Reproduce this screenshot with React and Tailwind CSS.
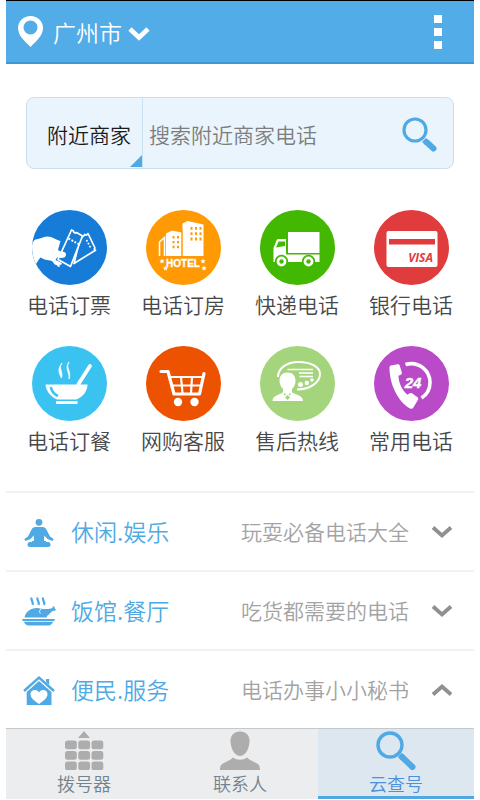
// src/App.jsx
import React, { useState } from "react";

const FONT = "font-['Noto_Sans_CJK_SC',sans-serif]";

const TicketIcon = () => (
  <svg viewBox="0 0 75 75" className="size-[75px]" aria-hidden="true">
    <circle cx="37.5" cy="37.5" r="37.5" fill="#167cd8" />
    <g stroke="#fff" strokeWidth="1.7" fill="#167cd8" strokeLinejoin="round">
      <path d="M48 29l5-4.500c1 1 2.500.5 3-1l7 14.500c-1 .5-1 1.800.5 2.200L42 53.500z" />
      <path d="M54.500 30l4.500 8.500" fill="none" strokeDasharray="1.700 1.600" />
      <path d="M39.500 20l2 1c0 1.500 1.500 2.500 3 1.500l6 3.500L38.500 56.500 26 49.500z" />
      <path d="M36.500 28.500l11 6" fill="none" strokeWidth="2" strokeDasharray="1.900 1.500" />
    </g>
    <path
      d="M0 36C1 31 2 29.500 6 29c4-1 6-2.500 9.500-2.500 4.500 0 8 3 13 4.500L26 40c3 2.500 8 .5 8 4.500 0 3.500-4 4-9 3l-1.500 2.500c2 1 4.500 1.500 6.500 3.500-.5 1.500-1.500 1.500-2.500 1l.5 2c-2 1-2.500-.5-3.500-1.500C21 54.500 22 51 18 50.500c-4-.5-7-1.500-9.500-3C7 49 6 51 4 54 1 48 0 42 0 36z"
      fill="#fff"
    />
  </svg>
);

const HotelIcon = () => (
  <svg viewBox="0 0 75 75" className="size-[75px]" aria-hidden="true">
    <circle cx="37.5" cy="37.5" r="37.5" fill="#ff9a05" />
    <path d="M13.500 46V32l5-4.500V46" fill="none" stroke="#fff" strokeWidth="1.600" />
    <path d="M20 46V23.500l6-3 9.500 2V46z" fill="#fff" />
    <path d="M36.500 46V13.500l5-2.500 16 3.500V46z" fill="#fff" />
    <path d="M36 20v26" stroke="#ff9a05" strokeWidth="1" />
    <g stroke="#ff9a05" strokeWidth="2" fill="none">
      <path d="M45.500 17v16M50 17v16M54.500 17v16" strokeDasharray="2.800 2.500" />
      <path d="M27.500 26v14M32 26v14" strokeDasharray="2.400 2.500" />
    </g>
    <text
      x="37"
      y="57"
      textAnchor="middle"
      fill="#fff"
      stroke="#fff"
      strokeWidth=".3"
      className="font-['Liberation_Sans_Narrow','Liberation_Sans',sans-serif] text-[10px] font-bold"
    >
      HOTEL
    </text>
    <g fill="#fff">
      <path d="M16 48.500l.8 1.700 1.800.2-1.300 1.300.3 1.800-1.600-.9-1.600.9.300-1.800-1.300-1.300 1.800-.2z" />
      <path d="M19.500 55.500l.8 1.700 1.800.2-1.300 1.300.3 1.800-1.600-.9-1.600.9.300-1.800-1.300-1.300 1.800-.2z" />
      <path d="M57 48.500l.8 1.700 1.800.2-1.300 1.300.3 1.800-1.600-.9-1.600.9.300-1.800-1.300-1.300 1.800-.2z" />
      <path d="M58 55.500l.8 1.700 1.800.2-1.300 1.300.3 1.800-1.600-.9-1.600.9.300-1.800-1.300-1.300 1.800-.2z" />
    </g>
  </svg>
);

const TruckIcon = () => (
  <svg viewBox="0 0 75 75" className="size-[75px]" aria-hidden="true">
    <circle cx="37.5" cy="37.5" r="37.5" fill="#43b802" />
    <path d="M28 22h31.500v21H28z" fill="#fff" />
    <path d="M13.500 52V38l3-7.500c.5-1 1-1.500 2-1.500H26v15.500h33.500V52z" fill="#fff" />
    <path d="M16 37.500l2.500-6H25v4.500z" fill="#43b802" />
    <g fill="#fff" stroke="#43b802" strokeWidth="1.800">
      <circle cx="21.5" cy="51.5" r="5.8" />
      <circle cx="48.5" cy="51.5" r="5.8" />
    </g>
    <g fill="#43b802">
      <circle cx="21.5" cy="51.5" r="2.200" />
      <circle cx="48.5" cy="51.5" r="2.200" />
    </g>
  </svg>
);

const CardIcon = () => (
  <svg viewBox="0 0 75 75" className="size-[75px]" aria-hidden="true">
    <circle cx="37.5" cy="37.5" r="37.5" fill="#e03c3e" />
    <rect x="12.5" y="21" width="51" height="36" rx="2" fill="#fff" />
    <path d="M15 29h46v5.500H15z" fill="#e03c3e" />
    <text
      x="59"
      y="51.5"
      textAnchor="end"
      fill="#e03c3e"
      className="font-['Open_Sans','Liberation_Sans',sans-serif] text-[12px] font-bold italic"
    >
      VISA
    </text>
  </svg>
);

const BowlIcon = () => (
  <svg viewBox="0 0 75 75" className="size-[75px]" aria-hidden="true">
    <circle cx="37.5" cy="37.5" r="37.5" fill="#3ac2f1" />
    <path d="M13.500 38.500h42c0 6-4 12-11 15H25c-7-3-11-9-11.500-15z" fill="#fff" />
    <path d="M24 55h21.500v3H24z" fill="#fff" />
    <path d="M46.500 38L58 20" stroke="#fff" strokeWidth="3.800" strokeLinecap="round" />
    <path d="M19 42c1 3.500 2.500 5.500 6 7.500" stroke="#3ac2f1" strokeWidth="2.600" strokeLinecap="round" fill="none" />
    <path
      d="M30 17c-4 5 1.500 9-.5 15-3-6-4-9 .5-15zM37 16c-4 6 3 9 0 17 1-7-5-10 0-17z"
      fill="#fff"
      stroke="#fff"
      strokeWidth=".8"
    />
  </svg>
);

const CartIcon = () => (
  <svg viewBox="0 0 75 75" className="size-[75px]" aria-hidden="true">
    <circle cx="37.5" cy="37.5" r="37.5" fill="#ec5200" />
    <g fill="none" stroke="#fff" strokeLinecap="round" strokeLinejoin="round">
      <path d="M15 25.500h7l6 22.500h25.500L58 27.500" strokeWidth="3.200" />
      <path d="M24 31h33M26 39.500h29M35 31l1.500 16M46 31l-1 16" strokeWidth="2.200" />
    </g>
    <circle cx="32" cy="56" r="4.200" fill="#fff" />
    <circle cx="48.5" cy="56" r="4.200" fill="#fff" />
  </svg>
);

const SupportIcon = () => (
  <svg viewBox="0 0 75 75" className="size-[75px]" aria-hidden="true">
    <circle cx="37.5" cy="37.5" r="37.5" fill="#a4d47b" />
    <path
      d="M18 31C18 22 27 16 38.500 16 51 16 60 21 60 28c0 8-9 15-23 15.500"
      fill="none"
      stroke="#fff"
      strokeWidth="2"
    />
    <path d="M27.500 23.500H53M39 27h14M39.500 30.500H53" stroke="#fff" strokeWidth="1.500" />
    <g fill="#fff">
      <circle cx="40.5" cy="38.5" r="2.500" />
      <circle cx="46.8" cy="37" r="2.200" />
      <circle cx="52" cy="34" r="1.800" />
      <path d="M27.500 26.500c5 0 8 3.500 8 8 0 4-1.500 6.500-3.500 8.500v3.500l7 3c2.500 1 4 3 4 5.500H12.500c0-2.500 1.500-4.500 4-5.500l6.500-3V43c-2-2-3.500-4.500-3.500-8.500 0-4.500 3-8 8-8z" />
    </g>
    <path d="M24 47.500l1.500 1.500M30.500 47.500L29 49M26 51.500l1.500-1.500 1.500 1.500-1.500 1.500z" stroke="#a4d47b" strokeWidth="1.400" fill="#a4d47b" />
  </svg>
);

const HotlineIcon = () => (
  <svg viewBox="0 0 75 75" className="size-[75px]" aria-hidden="true">
    <circle cx="37.5" cy="37.5" r="37.5" fill="#b94bc8" />
    <path
      d="M17 19.500l6.500-1.300c1.200-.2 2 .3 2.300 1.500l2 6.800c.2 1-.2 2-1.100 2.300l-2.200.9c0 7 3.500 14 8.800 19l2.500-1.500c.7-.4 1.500-.4 2.200.1l5.500 4c.9.7 1 1.700.4 2.600l-4.500 7.600c-.8 1.300-2 1.700-3.300 1C24 56 15.500 38 15.500 22c0-1.400.3-2.200 1.500-2.500z"
      fill="#fff"
    />
    <path d="M31.500 18.500C45 14.500 56 25 56 36.500c0 6.500-3 12-8.500 15.500" fill="none" stroke="#fff" strokeWidth="3.600" />
    <text
      x="39"
      y="42"
      textAnchor="middle"
      fill="#fff"
      stroke="#fff"
      strokeWidth=".4"
      className="font-['Liberation_Sans_Narrow','Liberation_Sans',sans-serif] text-[15px] font-bold italic"
    >
      24
    </text>
  </svg>
);

const YogaIcon = () => (
  <svg viewBox="0 0 36 36" className="size-9" fill="#4fa9e4" aria-hidden="true">
    <circle cx="18" cy="8.300" r="3.400" />
    <path d="M14.500 13h7c2 0 3.300 1.200 4.300 3.200l3.200 6.300 3 2c1.200 1 .3 2.700-1.200 2.200L26.500 25l-3.200-3.500-.3 6h-10l-.3-6L9.500 25l-4.300 1.700c-1.500.5-2.400-1.200-1.200-2.200l3-2 3.200-6.300c1-2 2.300-3.200 4.300-3.200z" />
    <rect x="6.500" y="28" width="23" height="5" rx="2.500" />
    <path d="M11 27h14v2H11z" />
  </svg>
);

const ChickenIcon = () => (
  <svg viewBox="0 0 36 36" className="size-9" fill="#4fa9e4" aria-hidden="true">
    <path
      d="M10.500 4.500c-1 3 2.500 4 1 7.500M16.500 4.500c-1 3 2.500 4 1 7.500M22 4.500c-1 3 2.500 4 1 7.500"
      fill="none"
      stroke="#4fa9e4"
      strokeWidth="2.200"
    />
    <path d="M3.500 24.500C4.500 19 9.500 15 16 15c2.500 0 4 1 6 .9 4 0 6 .6 9.300-.9l.7-1.800 1.500.5.2 1.700 1.300 1-1.300 1.600-1.700-.2c-2.500 1.700-3.500 3.700-5.500 4.700l-1 2z" />
    <path d="M20 16c-1.800 1.500-1.800 3-.5 4.500" fill="none" stroke="#fff" strokeWidth=".9" />
    <path d="M1 26h33l-1 2.200H2zM3 29h29c-1 2.300-2.500 3.500-4.500 3.500h-20C5.500 32.500 4 31.300 3 29z" />
  </svg>
);

const HomeIcon = () => (
  <svg viewBox="0 0 36 36" className="size-9" fill="#4fa9e4" aria-hidden="true">
    <path d="M3 19L18 5.500 33 19" fill="none" stroke="#4fa9e4" strokeWidth="2.400" />
    <path d="M25 7h3.200v6L25 10z" />
    <path d="M5.700 20L18 9l12.500 11v13H5.700z" />
    <path
      d="M18 32c-5-3.500-8.500-6-8.500-10 0-4.500 6.500-5.500 8.500-1.500 2-4 8.500-3 8.500 1.500 0 4-3.500 6.500-8.500 10z"
      fill="#fff"
    />
  </svg>
);

const Chevron = ({ open }) => (
  <svg viewBox="0 0 22 14" className="h-[14px] w-[22px]" aria-hidden="true">
    <path d={open ? "M2 11.500L11 3.500l9 8" : "M2 2.500l9 8 9-8"} fill="none" stroke="#909090" strokeWidth="3.800" />
  </svg>
);

const DialerIcon = () => (
  <svg viewBox="0 0 40 40" className="size-10" fill="#adadad" aria-hidden="true">
    <path d="M20 1l6 7H14z" />
    {[10.5, 21, 31.5].map((y) =>
      [1, 14.25, 27.5].map((x) => <rect key={`${x}-${y}`} x={x} y={y} width="11.800" height="8.800" rx="2.500" />)
    )}
  </svg>
);

const ContactIcon = () => (
  <svg viewBox="0 0 40 40" className="size-10" fill="#adadad" aria-hidden="true">
    <path d="M20 1.500c6 0 9.500 4 9.500 9 0 7-3.500 15.500-9.500 15.500s-9.500-8.500-9.500-15.500c0-5 3.500-9 9.500-9z" />
    <path d="M0 40c0-4 1-5.500 4-7 4-2 7-3.500 9-5.500 4 3 10 3 14 0 2 2 5 3.500 9 5.500 3 1.500 4 3 4 7z" />
  </svg>
);

const CloudSearchIcon = () => (
  <svg viewBox="0 0 40 40" className="size-10" fill="none" stroke="#4fa9e4" aria-hidden="true">
    <circle cx="14" cy="15" r="12" strokeWidth="3.400" />
    <path d="M24 25l3 3" strokeWidth="6" />
    <path d="M26 27l10.500 10" strokeWidth="6" strokeLinecap="round" />
  </svg>
);

const SHORTCUTS = [
  { label: "电话订票", Icon: TicketIcon },
  { label: "电话订房", Icon: HotelIcon },
  { label: "快递电话", Icon: TruckIcon },
  { label: "银行电话", Icon: CardIcon },
  { label: "电话订餐", Icon: BowlIcon },
  { label: "网购客服", Icon: CartIcon },
  { label: "售后热线", Icon: SupportIcon },
  { label: "常用电话", Icon: HotlineIcon },
];

const CATEGORIES = [
  { title: "休闲.娱乐", desc: "玩耍必备电话大全", Icon: YogaIcon },
  { title: "饭馆.餐厅", desc: "吃货都需要的电话", Icon: ChickenIcon },
  { title: "便民.服务", desc: "电话办事小小秘书", Icon: HomeIcon },
];

const TABS = [
  { label: "拨号器", Icon: DialerIcon },
  { label: "联系人", Icon: ContactIcon },
  { label: "云查号", Icon: CloudSearchIcon },
];

const Header = () => (
  <header className="flex h-16 items-center justify-between border-t border-b-2 border-t-black border-b-[#3f97d6] bg-[#52ace7] pr-8 pl-3">
    <button type="button" className="flex items-center text-[23px] leading-8 text-white">
      <svg viewBox="0 0 25 31" className="mr-[10px] h-[31px] w-[25px]" aria-hidden="true">
        <path
          fill="#fff"
          fillRule="evenodd"
          d="M12.500 0C19.500 0 25 5.300 25 12c0 8-7 13-12.500 19C7 25 0 20 0 12 0 5.300 5.500 0 12.500 0zm0 4.500a7 7 0 100 14 7 7 0 000-14z"
        />
      </svg>
      广州市
      <svg viewBox="0 0 22 16" className="mt-1 ml-[6px] h-4 w-[22px]" aria-hidden="true">
        <path d="M2 3l9 8.500L20 3" fill="none" stroke="#fff" strokeWidth="4.600" />
      </svg>
    </button>
    <button type="button" aria-label="更多" className="flex flex-col gap-[5px]">
      <span className="size-2 bg-white" />
      <span className="size-2 bg-white" />
      <span className="size-2 bg-white" />
    </button>
  </header>
);

const SearchBar = () => (
  <form
    className="mx-5 mt-[33px] flex h-18 rounded-lg border border-[#c9dfec] bg-[#eaf4fc] text-[21px]"
    onSubmit={(e) => e.preventDefault()}
  >
    <div className="relative flex w-[116px] shrink-0 border-r border-[#c9e2f1]">
      <select aria-label="搜索范围" className="w-full appearance-none bg-transparent pt-1 pl-5 text-[#1c1c1c] outline-none">
        <option>附近商家</option>
      </select>
      <svg viewBox="0 0 12 12" className="pointer-events-none absolute right-0 bottom-px size-3" aria-hidden="true">
        <path d="M12 0v12H0z" fill="#4fa9e4" />
      </svg>
    </div>
    <input
      type="search"
      aria-label="搜索"
      placeholder="搜索附近商家电话"
      className="min-w-0 flex-1 bg-transparent pt-1 pl-[6px] text-[#333] outline-none placeholder:text-[#7d7d7d]"
    />
    <button type="submit" aria-label="搜索" className="pt-[3px] pr-4 pl-2">
      <svg viewBox="0 0 35 35" className="size-[35px]" fill="none" stroke="#4fa9e4" aria-hidden="true">
        <circle cx="13" cy="13" r="11" strokeWidth="3.200" />
        <path d="M22 23l3 3" strokeWidth="5.500" />
        <path d="M25 25.500l6.500 6" strokeWidth="6" strokeLinecap="round" />
      </svg>
    </button>
  </form>
);

export default function App() {
  const [openRow, setOpenRow] = useState(2);
  const [tab, setTab] = useState(2);

  return (
    <div className={`${FONT} bg-white px-[6px] font-[350]`}>
      <Header />

      <main>
        <SearchBar />

        <section className="mt-[41px] grid grid-cols-4 gap-y-7 px-[6px]">
          {SHORTCUTS.map(({ label, Icon }) => (
            <button key={label} type="button" className="flex flex-col items-center gap-[5px] text-[21px] leading-7 text-[#484848]">
              <Icon />
              {label}
            </button>
          ))}
        </section>

        <section className="mt-[37px]">
          {CATEGORIES.map(({ title, desc, Icon }, i) => (
            <button
              key={title}
              type="button"
              aria-expanded={openRow === i}
              onClick={() => setOpenRow(openRow === i ? -1 : i)}
              className="flex h-[79px] w-full items-center border-t-2 border-[#f1f1f1] pr-[21px] pl-[15px] text-left"
            >
              <Icon />
              <span className="ml-[14px] text-[23px] text-[#4fa9e4]">{title}</span>
              <span className="mr-[22px] ml-auto text-[21px] text-[#a3a3a3]">{desc}</span>
              <Chevron open={openRow === i} />
            </button>
          ))}
        </section>
      </main>

      <nav className="grid grid-cols-3 border-t border-[#c4c8cb]">
        {TABS.map(({ label, Icon }, i) => (
          <button
            key={label}
            type="button"
            aria-current={tab === i ? "page" : undefined}
            onClick={() => setTab(i)}
            className={
              tab === i
                ? "flex flex-col items-center border-b-3 border-[#4fa9e0] bg-[#dde7ef] pt-px text-[18px] leading-[26px] text-[#4a90dc]"
                : "flex flex-col items-center border-b-3 border-[#ecedee] bg-[#ecedee] pt-px text-[18px] leading-[26px] text-[#74828e]"
            }
          >
            <Icon />
            {label}
          </button>
        ))}
      </nav>
    </div>
  );
}
